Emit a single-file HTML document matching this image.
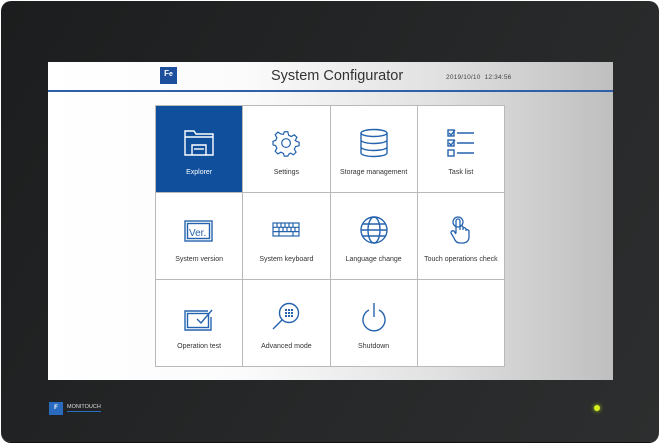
<!DOCTYPE html>
<html><head><style>
*{margin:0;padding:0;box-sizing:border-box}
body{width:660px;height:444px;background:#fff;overflow:hidden;font-family:"Liberation Sans",sans-serif}
.bezel{position:absolute;left:1px;top:1px;width:658px;height:441px;border-radius:10px;background:linear-gradient(120deg,#1c1d1e,#262829 60%,#2c2e2f);box-shadow:0 1px 0 #111}
.screen{position:absolute;left:48px;top:62px;width:565px;height:318px;background:linear-gradient(90deg,#fff 0%,#fbfbfb 35%,#e0e0e0 70%,#bfbfbf 100%);overflow:hidden}
.hdr{position:absolute;left:0;top:0;width:100%;height:30px;border-bottom:2px solid #2f5fa8}
.logo{position:absolute;left:112px;top:5px;width:17px;height:17px;background:#1d4f9c;color:#fff;font-size:8px;font-weight:bold;text-align:center;line-height:13px}
.title{position:absolute;left:223px;top:6px;font-size:14.5px;color:#333}
.date{position:absolute;left:398px;top:12px;font-size:6.5px;color:#444;letter-spacing:.2px}
.grid{position:absolute;left:107px;top:43px;width:350px;height:262px;display:grid;grid-template-columns:repeat(4,1fr);grid-template-rows:repeat(3,1fr);gap:1px;background:#b9b9b9;border:1px solid #b9b9b9}
.c{background:#fff;position:relative}
.c svg{position:absolute;left:50%;top:22px;transform:translateX(-50%)}
.c span{position:absolute;left:0;right:0;top:63px;text-align:center;font-size:7px;color:#333}
.c.sel{background:#0f4f9c}
.c.sel span{color:#fff}
</style></head><body>
<div class="bezel"></div>
<div class="screen">
<div class="hdr"><div class="logo">F<span style="font-size:7px">e</span></div><div class="title">System Configurator</div><div class="date">2019/10/10 &nbsp;12:34:56</div></div>
<div class="grid">
<div class="c sel"><svg width="32" height="30" viewBox="0 0 32 30" fill="none" stroke="#fff" stroke-width="1.4"><path d="M2 3h9l2 3h17v21H2z"/><path d="M2 9h28"/><path d="M9 27V17h14v10"/><path d="M11 21h10"/></svg><span>Explorer</span></div>
<div class="c"><svg width="30" height="30" viewBox="0 0 30 30" fill="none" stroke="#2563ae" stroke-width="1.4"><g transform="translate(2 2) scale(.87)"><path d="M13 2h4l1 4 3 1.5 3.5-2 3 3-2 3.5L27 13l3 1v4l-4 1-1.5 3 2 3.5-3 3-3.5-2L18 28l-1 2h-4l-1-3-3-1.5-3.5 2-3-3 2-3.5L3 18l-3-1v-4l3-1 1.5-3-2-3.5 3-3 3.5 2L12 5z"/><circle cx="15" cy="15" r="5"/></g></svg><span>Settings</span></div>
<div class="c"><svg width="30" height="30" viewBox="0 0 30 30" fill="none" stroke="#2563ae" stroke-width="1.4"><ellipse cx="15" cy="5" rx="13" ry="3.5"/><path d="M2 5v20c0 2 6 3.5 13 3.5s13-1.5 13-3.5V5M2 12c0 2 6 3.5 13 3.5s13-1.5 13-3.5M2 19c0 2 6 3.5 13 3.5s13-1.5 13-3.5"/></svg><span>Storage management</span></div>
<div class="c"><svg width="30" height="30" viewBox="0 0 30 30" fill="none" stroke="#2563ae" stroke-width="1.4"><rect x="2" y="2" width="6" height="6"/><rect x="2" y="12" width="6" height="6"/><rect x="2" y="22" width="6" height="6"/><path d="M3 5l2 2 4-5M3 15l2 2 4-5M11 5h17M11 15h17M11 25h17"/></svg><span>Task list</span></div>
<div class="c"><svg width="30" height="30" viewBox="0 0 30 30" fill="none" stroke="#2563ae" stroke-width="1.4"><rect x="1" y="6" width="27" height="20"/><rect x="3.5" y="8.5" width="22" height="15"/><text x="5" y="21" font-size="10" fill="#2563ae" stroke="none" font-family="Liberation Sans">Ver.</text></svg><span>System version</span></div>
<div class="c"><svg width="30" height="30" viewBox="0 0 30 30" fill="none" stroke="#2563ae" stroke-width="1.2"><rect x="2" y="8" width="26" height="13"/><path d="M2 12.3h26M2 16.6h26M6 8v4.3M10 8v4.3M14 8v4.3M18 8v4.3M22 8v4.3M8 12.3v4.3M12 12.3v4.3M16 12.3v4.3M20 12.3v4.3M24 12.3v4.3M8 16.6v4.4M22 16.6v4.4"/></svg><span>System keyboard</span></div>
<div class="c"><svg width="30" height="30" viewBox="0 0 30 30" fill="none" stroke="#2563ae" stroke-width="1.4"><circle cx="15" cy="15" r="13"/><ellipse cx="15" cy="15" rx="6" ry="13"/><path d="M2 15h26M4 9h22M4 21h22"/></svg><span>Language change</span></div>
<div class="c"><svg width="30" height="30" viewBox="0 0 30 30" fill="none" stroke="#2563ae" stroke-width="1.3"><circle cx="12" cy="7" r="5"/><path d="M10 18V6a2 2 0 0 1 4 0v9M14 11a2 2 0 0 1 3 1v3M17 13a2 2 0 0 1 3 1v2M20 15a2 2 0 0 1 3 1v6c0 4-3 6-6 6h-3c-3 0-5-2-6-5l-3-5a2 2 0 0 1 3-2l2 3"/></svg><span>Touch operations check</span></div>
<div class="c"><svg width="30" height="30" viewBox="0 0 30 30" fill="none" stroke="#2563ae" stroke-width="1.4"><path d="M24 9H1v19h26V15"/><rect x="3.5" y="11.5" width="21" height="14"/><path d="M13 17l4 4 11-13"/></svg><span>Operation test</span></div>
<div class="c"><svg width="30" height="30" viewBox="0 0 30 30" fill="#2563ae" stroke="#2563ae" stroke-width="1.4"><circle cx="18" cy="11" r="9.5" fill="none"/><path d="M11 18L2 27" fill="none"/><g stroke="none"><rect x="14" y="7" width="2" height="2"/><rect x="17" y="7" width="2" height="2"/><rect x="20" y="7" width="2" height="2"/><rect x="14" y="10" width="2" height="2"/><rect x="17" y="10" width="2" height="2"/><rect x="20" y="10" width="2" height="2"/><rect x="14" y="13" width="2" height="2"/><rect x="17" y="13" width="2" height="2"/><rect x="20" y="13" width="2" height="2"/></g></svg><span>Advanced mode</span></div>
<div class="c"><svg width="30" height="30" viewBox="0 0 30 30" fill="none" stroke="#2563ae" stroke-width="1.4"><path d="M10 8a11 11 0 1 0 10 0"/><path d="M15 1v14"/></svg><span>Shutdown</span></div>
<div class="c"></div>
</div>
</div>
<div style="position:absolute;left:49px;top:402px;width:14px;height:13px;background:#2a6bc0;color:#fff;font-size:6px;font-weight:bold;text-align:center;line-height:13px">F</div>
<div style="position:absolute;left:67px;top:404px;font-size:5.5px;color:#ddd;border-bottom:1px solid #2a6bc0;padding-bottom:1px">MONITOUCH</div>
<div style="position:absolute;left:594px;top:405px;width:6px;height:6px;border-radius:50%;background:#d8f020;box-shadow:0 0 4px #b8e010"></div>
</body></html>
